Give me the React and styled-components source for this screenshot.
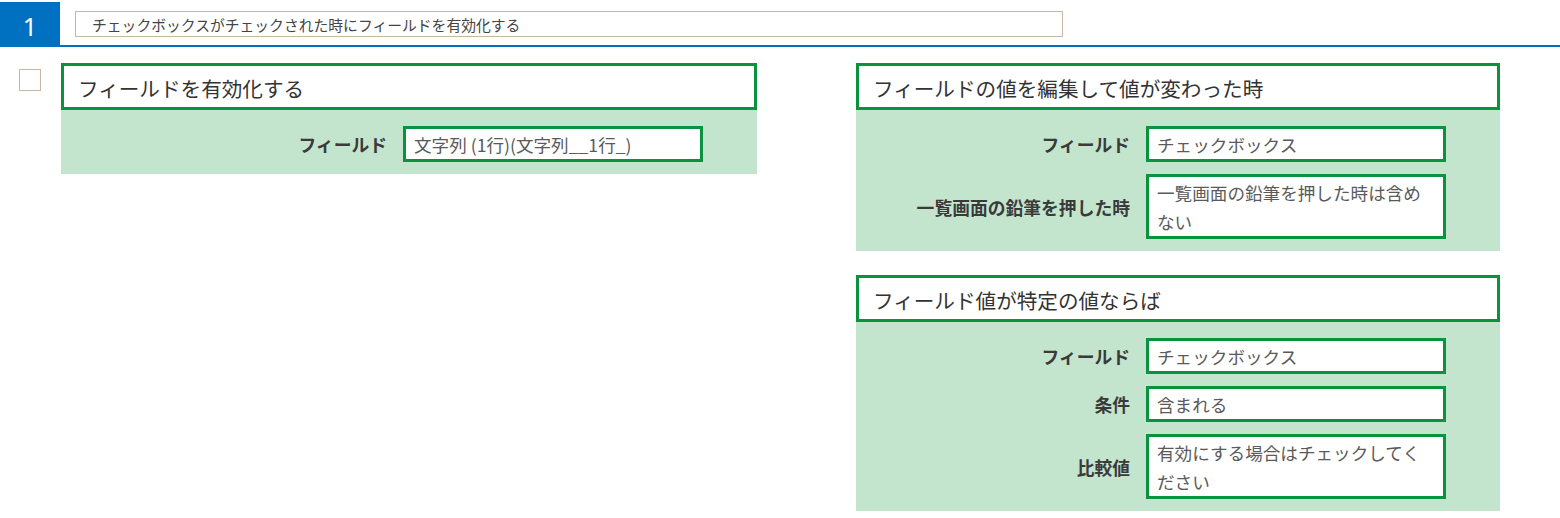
import React from 'react'
import styled, { createGlobalStyle } from 'styled-components'

const GlobalStyle = createGlobalStyle`
  html, body {
    margin: 0;
    padding: 0;
    background: #fff;
  }
  body {
    font-family: "Noto Sans CJK JP", "Noto Sans", sans-serif;
    color: #333;
  }
`

const green = '#0a933f'
const greenBg = '#c4e5cd'
const tan = '#c7b6a2'

const panels = [
  {
    title: 'フィールドの値を編集して値が変わった時',
    rows: [
      { label: 'フィールド', value: 'チェックボックス' },
      { label: '一覧画面の鉛筆を押した時', value: '一覧画面の鉛筆を押した時は含めない' },
    ],
  },
  {
    title: 'フィールド値が特定の値ならば',
    rows: [
      { label: 'フィールド', value: 'チェックボックス' },
      { label: '条件', value: '含まれる' },
      { label: '比較値', value: '有効にする場合はチェックしてください' },
    ],
  },
]

const App = () => {
  return (
    <Page>
      <GlobalStyle />
      <Header>
        <Number>1</Number>
        <TitleInput>チェックボックスがチェックされた時にフィールドを有効化する</TitleInput>
      </Header>
      <Content>
        <CheckColumn>
          <Checkbox />
        </CheckColumn>
        <Panel width={696}>
          <PanelTitle>フィールドを有効化する</PanelTitle>
          <PanelBody>
            <Label>フィールド</Label>
            <Field>文字列 (1行)(文字列__1行_)</Field>
          </PanelBody>
        </Panel>
        <RightColumn>
          {panels.map((p) => (
            <Panel width={644} key={p.title}>
              <PanelTitle>{p.title}</PanelTitle>
              <PanelBody>
                {p.rows.map((r) => (
                  <React.Fragment key={r.label}>
                    <Label>{r.label}</Label>
                    <Field>{r.value}</Field>
                  </React.Fragment>
                ))}
              </PanelBody>
            </Panel>
          ))}
        </RightColumn>
      </Content>
    </Page>
  )
}

const Page = styled.div`
  width: 1560px;
  height: 518px;
  overflow: hidden;
`

const Header = styled.div`
  display: flex;
  align-items: flex-start;
  padding-top: 2px;
  border-bottom: 2px solid #0070c0;
  height: 43px;
`

const Number = styled.div`
  width: 60px;
  height: 43px;
  background: #0070c0;
  color: #fff;
  font-family: "Noto Sans", "Liberation Sans", sans-serif;
  font-size: 25px;
  line-height: 48px;
  text-align: center;
`

const TitleInput = styled.div`
  box-sizing: border-box;
  margin: 9px 0 0 15px;
  width: 988px;
  height: 26px;
  border: 1px solid ${tan};
  padding: 0 16px;
  font-size: 14.8px;
  line-height: 25px;
  color: #444;
  white-space: nowrap;
`

const Content = styled.div`
  display: flex;
  align-items: flex-start;
  padding-top: 16px;
`

const CheckColumn = styled.div`
  width: 61px;
  flex: none;
`

const Checkbox = styled.div`
  box-sizing: border-box;
  width: 22px;
  height: 22px;
  margin: 6px 0 0 19px;
  border: 1px solid ${tan};
  background: #fff;
`

const RightColumn = styled.div`
  display: flex;
  flex-direction: column;
  gap: 24px;
  margin-left: 99px;
`

const Panel = styled.div`
  width: ${(p) => p.width}px;
  flex: none;
`

const PanelTitle = styled.div`
  box-sizing: border-box;
  height: 47px;
  border: 3px solid ${green};
  background: #fff;
  padding: 0 14px;
  font-size: 20.6px;
  line-height: 44px;
  color: #333;
  white-space: nowrap;
`

const PanelBody = styled.div`
  display: grid;
  grid-template-columns: 1fr 300px;
  column-gap: 16px;
  row-gap: 12px;
  align-items: center;
  background: ${greenBg};
  padding: 16px 54px 12px 0;
`

const Label = styled.div`
  text-align: right;
  font-size: 17.8px;
  font-weight: 700;
  color: #3a3a3a;
  white-space: nowrap;
`

const Field = styled.div`
  box-sizing: border-box;
  min-height: 36px;
  border: 3px solid ${green};
  background: #fff;
  padding: 1px 12px 0 8px;
  font-size: 17.6px;
  line-height: 29px;
  color: #5a5a5a;
`

export default App
